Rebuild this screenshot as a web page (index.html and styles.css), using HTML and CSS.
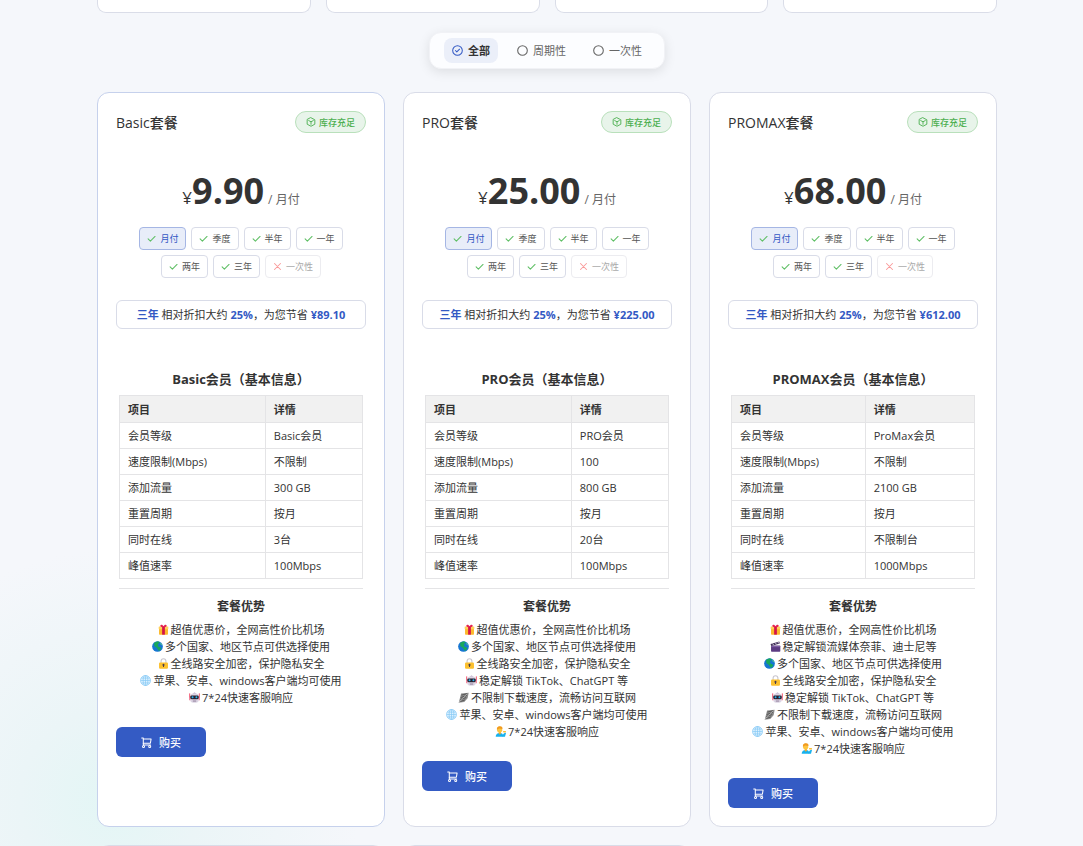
FILE: index.html
```html
<!DOCTYPE html>
<html lang="zh-CN">
<head>
    <meta charset="UTF-8">
    <meta name="viewport" content="width=device-width, initial-scale=1.0">
    <title>套餐</title>
    <link rel="stylesheet" href="styles.css">
</head>
<body>
    <svg class="sprite" aria-hidden="true">
        <symbol id="i-circle" viewBox="0 0 24 24"><circle cx="12" cy="12" r="10.5" fill="none" stroke="currentColor" stroke-width="2.4"/></symbol>
        <symbol id="i-circle-check" viewBox="0 0 24 24"><g fill="none" stroke="currentColor" stroke-width="2.2" stroke-linecap="round" stroke-linejoin="round"><circle cx="12" cy="12" r="10.5"/><path d="M7.5 12l3 3.2 6-6"/></g></symbol>
        <symbol id="i-cube" viewBox="0 0 24 24"><g fill="none" stroke="currentColor" stroke-width="2.2" stroke-linejoin="round" stroke-linecap="round"><path d="M12 1.8l9.2 4.9v10.6L12 22.2l-9.2-4.9V6.7z"/><path d="M6.5 8.6L12 11.5l5.5-2.9M12 11.5v6"/></g></symbol>
        <symbol id="i-check" viewBox="0 0 24 24"><path d="M3 13l6 6L21.5 6.5" fill="none" stroke="currentColor" stroke-width="2.8" stroke-linecap="round" stroke-linejoin="round"/></symbol>
        <symbol id="i-cross" viewBox="0 0 24 24"><path d="M4 4l16 16M20 4L4 20" fill="none" stroke="currentColor" stroke-width="2.8" stroke-linecap="round"/></symbol>
        <symbol id="i-cart" viewBox="0 0 24 24"><g fill="none" stroke="currentColor" stroke-width="2.2" stroke-linecap="round" stroke-linejoin="round"><path d="M1.500 2h3.500v15.500h16"/><path d="M5 4.500H22l-1.500 9H5"/><circle cx="5.500" cy="20.500" r="2.200"/><circle cx="19" cy="20.500" r="2.200"/></g></symbol>

        <symbol id="e-gift" viewBox="0 0 16 16"><rect x="1.5" y="6" width="13" height="9.5" rx="1" fill="#fcb92c"/><rect x="1" y="3.5" width="14" height="4" rx=".8" fill="#ffd05a"/><path d="M6 4h4v11.5H6z" fill="#d3134b"/><path d="M8 4.5C5 4.8 3 4 3.4 2.2 3.8.4 7 .6 8 3.4 9 .6 12.2.4 12.6 2.2 13 4 11 4.8 8 4.5z" fill="#e5214f"/></symbol>
        <symbol id="e-earth" viewBox="0 0 16 16"><circle cx="8" cy="8" r="7.8" fill="#1676d2"/><path d="M3 2.8C5 .8 9 0 10.5 1l.5 2-2.500 1.500L9.500 6 8 7.500 10.500 8.500l3 1.500c-.5 2-2 3.500-3.500 4.500L8.500 12 6.500 9.500 3.500 7.500z" fill="#18a85a"/><path d="M12.500 2.500l2 2.500-1 1-1.500-2z" fill="#5ad07d"/></symbol>
        <symbol id="e-lock" viewBox="0 0 16 16"><path d="M4.5 8V4.500a3.500 3.500 0 0 1 7 0V8" fill="none" stroke="#c9c6ce" stroke-width="1.600"/><rect x="1.500" y="6.500" width="13" height="9.200" rx="1.500" fill="#fcc02e"/><circle cx="8" cy="10" r="1.500" fill="#453c50"/><path d="M7.300 10h1.400v3.200H7.300z" fill="#453c50"/></symbol>
        <symbol id="e-globe" viewBox="0 0 16 16"><circle cx="8" cy="8" r="7.300" fill="#dcf1ff"/><g fill="none" stroke="#86c9f5"><circle cx="8" cy="8" r="7.300"/><ellipse cx="8" cy="8" rx="3.400" ry="7.300"/><path d="M8 1v14M1 8h14M2 4.500h12M2 11.500h12"/></g></symbol>
        <symbol id="e-robot" viewBox="0 0 16 16"><path d="M1 2v7M15 2v7" stroke="#ef3c5b" stroke-width="1.300"/><path d="M0 8h16v4H0z" fill="#f28aa0"/><rect x="2" y="2" width="12" height="13.500" rx="4" fill="#dcd5e4"/><path d="M5 2.500L8 .5l3 2z" fill="#c5b8d2"/><rect x="1.800" y="5" width="12.400" height="5.500" rx="2" fill="#2a2230"/><circle cx="5.200" cy="7.700" r="1.400" fill="#27b4f3"/><circle cx="10.800" cy="7.700" r="1.400" fill="#27b4f3"/><path d="M5.500 12.500h5v1.300h-5z" fill="#86718f"/></symbol>
        <symbol id="e-speed" viewBox="0 0 16 16"><path d="M4.500 2L15.500 1 14 9 9 14.500l-8 1L3 8z" fill="#8d8d8d"/><path d="M5 4.500l8-2M4 8l9-3M3.500 11L12 8M3 14l7-2.500" stroke="#4c4c4c" stroke-width="1.200"/><path d="M1 15.500L13 3" stroke="#d6d6d6" stroke-width=".8"/></symbol>
        <symbol id="e-clapper" viewBox="0 0 16 16"><rect x="1.500" y="6.500" width="13.500" height="9" rx="1" fill="#5c3b82"/><path d="M.8 4.500L13.500.8l.9 2.900L1.700 7.200z" fill="#44345a"/><path d="M3.500 3.700l2 2.300M7.500 2.500l2 2.300M11.300 1.400l2 2.300" stroke="#e8ddf0" stroke-width="1.200"/><path d="M2 8.200h12.500" stroke="#8a6bb0" stroke-width="1.200"/></symbol>
        <symbol id="e-person" viewBox="0 0 16 16"><path d="M1 15.700c0-4 2-5.700 6-5.700s5 1.700 5 5.700z" fill="#17b2ee"/><path d="M11 15.700l1-4 2.500-2 1.500.5-1.500 5.500z" fill="#17b2ee"/><path d="M11.500 7.300h4.300V9.500h-3.500z" fill="#fcbf34"/><path d="M5.500 8h3v3.500L7 12.500l-1.500-1z" fill="#f3a62a"/><rect x="3" y=".8" width="7.500" height="9" rx="3.600" fill="#fcc540"/><path d="M2.800 5.500C2.300 2 4 .3 7 .3s4.500 1.700 3.800 4.200L6 3.500z" fill="#f19a1f"/></symbol>
    </svg>

    <main class="page">
        <section class="stats">
            <div class="stat-card"></div>
            <div class="stat-card"></div>
            <div class="stat-card"></div>
            <div class="stat-card"></div>
        </section>

        <nav class="filter">
            <button type="button" class="filter-item active"><svg class="filter-icon"><use href="#i-circle-check"/></svg>全部</button>
            <button type="button" class="filter-item"><svg class="filter-icon"><use href="#i-circle"/></svg>周期性</button>
            <button type="button" class="filter-item"><svg class="filter-icon"><use href="#i-circle"/></svg>一次性</button>
        </nav>

        <section class="plans">
            <article class="plan highlighted">
                <header class="plan-header">
                    <h2 class="plan-name">Basic套餐</h2>
                    <span class="stock"><svg class="stock-icon"><use href="#i-cube"/></svg>库存充足</span>
                </header>
                <div class="price"><span class="currency">¥</span><span class="amount">9.90</span><span class="cycle">/ 月付</span></div>
                <div class="periods">
                    <button type="button" class="period selected"><svg class="period-icon"><use href="#i-check"/></svg>月付</button>
                    <button type="button" class="period"><svg class="period-icon"><use href="#i-check"/></svg>季度</button>
                    <button type="button" class="period"><svg class="period-icon"><use href="#i-check"/></svg>半年</button>
                    <button type="button" class="period"><svg class="period-icon"><use href="#i-check"/></svg>一年</button>
                    <button type="button" class="period"><svg class="period-icon"><use href="#i-check"/></svg>两年</button>
                    <button type="button" class="period"><svg class="period-icon"><use href="#i-check"/></svg>三年</button>
                    <button type="button" class="period" disabled><svg class="period-icon"><use href="#i-cross"/></svg>一次性</button>
                </div>
                <p class="saving"><b>三年</b> 相对折扣大约 <b>25%</b>，为您节省 <b>¥89.10</b></p>
                <div class="details">
                    <h3 class="details-title">Basic会员（基本信息）</h3>
                    <table class="specs">
                        <thead><tr><th class="spec-name">项目</th><th>详情</th></tr></thead>
                        <tbody>
                            <tr><td>会员等级</td><td>Basic会员</td></tr>
                            <tr><td>速度限制(Mbps)</td><td>不限制</td></tr>
                            <tr><td>添加流量</td><td>300 GB</td></tr>
                            <tr><td>重置周期</td><td>按月</td></tr>
                            <tr><td>同时在线</td><td>3台</td></tr>
                            <tr><td>峰值速率</td><td>100Mbps</td></tr>
                        </tbody>
                    </table>
                    <hr class="divider">
                    <h4 class="perks-title">套餐优势</h4>
                    <ul class="perks">
                        <li><svg class="emoji"><use href="#e-gift"/></svg>超值优惠价，全网高性价比机场</li>
                        <li><svg class="emoji"><use href="#e-earth"/></svg>多个国家、地区节点可供选择使用</li>
                        <li><svg class="emoji"><use href="#e-lock"/></svg>全线路安全加密，保护隐私安全</li>
                        <li><svg class="emoji"><use href="#e-globe"/></svg>苹果、安卓、windows客户端均可使用</li>
                        <li><svg class="emoji"><use href="#e-robot"/></svg>7*24快速客服响应</li>
                    </ul>
                </div>
                <button type="button" class="buy"><svg class="buy-icon"><use href="#i-cart"/></svg>购买</button>
            </article>

            <article class="plan">
                <header class="plan-header">
                    <h2 class="plan-name">PRO套餐</h2>
                    <span class="stock"><svg class="stock-icon"><use href="#i-cube"/></svg>库存充足</span>
                </header>
                <div class="price"><span class="currency">¥</span><span class="amount">25.00</span><span class="cycle">/ 月付</span></div>
                <div class="periods">
                    <button type="button" class="period selected"><svg class="period-icon"><use href="#i-check"/></svg>月付</button>
                    <button type="button" class="period"><svg class="period-icon"><use href="#i-check"/></svg>季度</button>
                    <button type="button" class="period"><svg class="period-icon"><use href="#i-check"/></svg>半年</button>
                    <button type="button" class="period"><svg class="period-icon"><use href="#i-check"/></svg>一年</button>
                    <button type="button" class="period"><svg class="period-icon"><use href="#i-check"/></svg>两年</button>
                    <button type="button" class="period"><svg class="period-icon"><use href="#i-check"/></svg>三年</button>
                    <button type="button" class="period" disabled><svg class="period-icon"><use href="#i-cross"/></svg>一次性</button>
                </div>
                <p class="saving"><b>三年</b> 相对折扣大约 <b>25%</b>，为您节省 <b>¥225.00</b></p>
                <div class="details">
                    <h3 class="details-title">PRO会员（基本信息）</h3>
                    <table class="specs">
                        <thead><tr><th class="spec-name">项目</th><th>详情</th></tr></thead>
                        <tbody>
                            <tr><td>会员等级</td><td>PRO会员</td></tr>
                            <tr><td>速度限制(Mbps)</td><td>100</td></tr>
                            <tr><td>添加流量</td><td>800 GB</td></tr>
                            <tr><td>重置周期</td><td>按月</td></tr>
                            <tr><td>同时在线</td><td>20台</td></tr>
                            <tr><td>峰值速率</td><td>100Mbps</td></tr>
                        </tbody>
                    </table>
                    <hr class="divider">
                    <h4 class="perks-title">套餐优势</h4>
                    <ul class="perks">
                        <li><svg class="emoji"><use href="#e-gift"/></svg>超值优惠价，全网高性价比机场</li>
                        <li><svg class="emoji"><use href="#e-earth"/></svg>多个国家、地区节点可供选择使用</li>
                        <li><svg class="emoji"><use href="#e-lock"/></svg>全线路安全加密，保护隐私安全</li>
                        <li><svg class="emoji"><use href="#e-robot"/></svg>稳定解锁 TikTok、ChatGPT 等</li>
                        <li><svg class="emoji"><use href="#e-speed"/></svg>不限制下载速度，流畅访问互联网</li>
                        <li><svg class="emoji"><use href="#e-globe"/></svg>苹果、安卓、windows客户端均可使用</li>
                        <li><svg class="emoji"><use href="#e-person"/></svg>7*24快速客服响应</li>
                    </ul>
                </div>
                <button type="button" class="buy"><svg class="buy-icon"><use href="#i-cart"/></svg>购买</button>
            </article>

            <article class="plan">
                <header class="plan-header">
                    <h2 class="plan-name">PROMAX套餐</h2>
                    <span class="stock"><svg class="stock-icon"><use href="#i-cube"/></svg>库存充足</span>
                </header>
                <div class="price"><span class="currency">¥</span><span class="amount">68.00</span><span class="cycle">/ 月付</span></div>
                <div class="periods">
                    <button type="button" class="period selected"><svg class="period-icon"><use href="#i-check"/></svg>月付</button>
                    <button type="button" class="period"><svg class="period-icon"><use href="#i-check"/></svg>季度</button>
                    <button type="button" class="period"><svg class="period-icon"><use href="#i-check"/></svg>半年</button>
                    <button type="button" class="period"><svg class="period-icon"><use href="#i-check"/></svg>一年</button>
                    <button type="button" class="period"><svg class="period-icon"><use href="#i-check"/></svg>两年</button>
                    <button type="button" class="period"><svg class="period-icon"><use href="#i-check"/></svg>三年</button>
                    <button type="button" class="period" disabled><svg class="period-icon"><use href="#i-cross"/></svg>一次性</button>
                </div>
                <p class="saving"><b>三年</b> 相对折扣大约 <b>25%</b>，为您节省 <b>¥612.00</b></p>
                <div class="details">
                    <h3 class="details-title">PROMAX会员（基本信息）</h3>
                    <table class="specs wide-value">
                        <thead><tr><th class="spec-name">项目</th><th>详情</th></tr></thead>
                        <tbody>
                            <tr><td>会员等级</td><td>ProMax会员</td></tr>
                            <tr><td>速度限制(Mbps)</td><td>不限制</td></tr>
                            <tr><td>添加流量</td><td>2100 GB</td></tr>
                            <tr><td>重置周期</td><td>按月</td></tr>
                            <tr><td>同时在线</td><td>不限制台</td></tr>
                            <tr><td>峰值速率</td><td>1000Mbps</td></tr>
                        </tbody>
                    </table>
                    <hr class="divider">
                    <h4 class="perks-title">套餐优势</h4>
                    <ul class="perks">
                        <li><svg class="emoji"><use href="#e-gift"/></svg>超值优惠价，全网高性价比机场</li>
                        <li><svg class="emoji"><use href="#e-clapper"/></svg>稳定解锁流媒体奈菲、迪士尼等</li>
                        <li><svg class="emoji"><use href="#e-earth"/></svg>多个国家、地区节点可供选择使用</li>
                        <li><svg class="emoji"><use href="#e-lock"/></svg>全线路安全加密，保护隐私安全</li>
                        <li><svg class="emoji"><use href="#e-robot"/></svg>稳定解锁 TikTok、ChatGPT 等</li>
                        <li><svg class="emoji"><use href="#e-speed"/></svg>不限制下载速度，流畅访问互联网</li>
                        <li><svg class="emoji"><use href="#e-globe"/></svg>苹果、安卓、windows客户端均可使用</li>
                        <li><svg class="emoji"><use href="#e-person"/></svg>7*24快速客服响应</li>
                    </ul>
                </div>
                <button type="button" class="buy"><svg class="buy-icon"><use href="#i-cart"/></svg>购买</button>
            </article>

            <article class="plan"></article>
            <article class="plan"></article>
        </section>
    </main>
</body>
</html>
```
FILE: styles.css
```css
* {
    box-sizing: border-box;
}
body {
    margin: 0;
    min-height: 100vh;
    background: radial-gradient(circle at 110px 800px, #e3f6f5 0, #ebf5f7 90px, #f5f7fb 250px) #f5f7fb;
    color: #333;
    font-family: "Open Sans", "Noto Sans CJK SC", sans-serif;
    font-size: 11px;
    line-height: 17px;
}
button {
    font: inherit;
    cursor: pointer;
}
h2, h3, h4, p, ul {
    margin: 0;
    padding: 0;
}
.sprite {
    display: none;
}
.page {
    padding: 0 86px 0 97px;
}

/* summary cards */
.stats {
    display: grid;
    grid-template-columns: repeat(4, 1fr);
    gap: 15px;
}
.stat-card {
    height: 13px;
    background: #fff;
    border: 1px solid #dadde8;
    border-top: none;
    border-radius: 0 0 9px 9px;
}

/* filter */
.filter {
    display: flex;
    gap: 11px;
    width: fit-content;
    margin: 19px auto 23px;
    padding: 5px 14px;
    background: #fcfdff;
    border: 1px solid #f1f2f6;
    border-radius: 12px;
    box-shadow: 0 3px 12px rgba(0, 0, 0, 0.1);
}
.filter-item {
    display: flex;
    align-items: center;
    gap: 5px;
    height: 25px;
    padding: 0 8px;
    border: none;
    border-radius: 8px;
    background: none;
    color: #666;
}
.filter-item.active {
    background: #ebeff9;
    color: #333;
    font-weight: bold;
}
.filter-icon {
    width: 11px;
    height: 11px;
}
.active .filter-icon {
    color: #3359c4;
}

/* plans */
.plans {
    display: grid;
    grid-template-columns: repeat(3, 1fr);
    gap: 18px;
}
.plan {
    padding: 18px;
    background: #fff;
    border: 1px solid #d9dce8;
    border-radius: 12px;
}
.plan.highlighted {
    border-color: #c6d1ec;
}
.plan-header {
    display: flex;
    align-items: center;
    justify-content: space-between;
}
.plan-name {
    font-size: 14px;
    font-weight: 500;
}
.stock {
    display: flex;
    align-items: center;
    gap: 3px;
    height: 22px;
    padding: 0 10px;
    background: #e8f4ea;
    border: 1px solid #b9e0bb;
    border-radius: 11px;
    color: #4caf50;
    font-size: 9px;
    font-weight: 500;
}
.stock-icon {
    width: 10px;
    height: 10px;
}
.price {
    display: flex;
    align-items: baseline;
    justify-content: center;
    margin-top: 34px;
    line-height: 48px;
}
.currency {
    font-size: 17px;
    font-weight: 500;
}
.amount {
    font-size: 36px;
    font-weight: bold;
}
.cycle {
    margin-left: 4px;
    color: #666;
    font-size: 12px;
}
.periods {
    display: flex;
    flex-wrap: wrap;
    justify-content: center;
    gap: 5px;
    margin-top: 3px;
    padding: 0 18px;
}
.period {
    display: flex;
    align-items: center;
    gap: 4px;
    height: 23px;
    padding: 0 7px;
    background: #fff;
    border: 1px solid #d9dce8;
    border-radius: 4px;
    color: #555;
    font-size: 9px;
}
.period-icon {
    width: 9px;
    height: 9px;
    color: #5fbf65;
}
.period.selected {
    background: #e8edf9;
    border-color: #a5b6e4;
    color: #3359c4;
}
.period:disabled {
    border-color: #ececf0;
    color: #aaa;
    cursor: not-allowed;
}
.period:disabled .period-icon {
    color: #fa9a9a;
}
.saving {
    margin-top: 22px;
    padding: 5px;
    border: 1px solid #d9dce8;
    border-radius: 6px;
    text-align: center;
    white-space: nowrap;
}
.saving b {
    color: #3359c4;
}

/* plan description */
.details {
    margin-top: 41px;
    padding: 0 3px;
}
.details-title {
    font-size: 13px;
    line-height: 19px;
    text-align: center;
}
.specs {
    width: 100%;
    margin-top: 6px;
    border-collapse: collapse;
}
.specs th,
.specs td {
    height: 26px;
    padding: 0 8px;
    border: 1px solid #e4e4e6;
    text-align: left;
    white-space: nowrap;
}
.specs th {
    height: 27px;
    background: #f1f1f1;
}
.spec-name {
    width: 60%;
}
.wide-value .spec-name {
    width: 55%;
}
.divider {
    margin: 9px 0;
    border: none;
    border-top: 1px solid #e4e4e6;
}
.perks-title {
    font-size: 12px;
    text-align: center;
}
.perks {
    margin-top: 6px;
    list-style: none;
}
.perks li {
    display: flex;
    align-items: center;
    justify-content: center;
    gap: 2px;
    white-space: nowrap;
}
.emoji {
    width: 11px;
    height: 11px;
}
.buy {
    display: flex;
    align-items: center;
    justify-content: center;
    gap: 7px;
    width: 90px;
    height: 30px;
    margin-top: 21px;
    background: #345bc4;
    border: none;
    border-radius: 6px;
    color: #fff;
    font-weight: 500;
}
.buy-icon {
    width: 11px;
    height: 11px;
}
```
